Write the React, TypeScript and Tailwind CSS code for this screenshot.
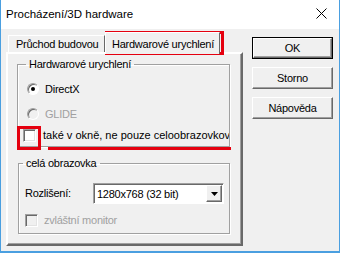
const font = { fontFamily: '"Liberation Sans", Arial, sans-serif' };

function Radio({ checked, disabled }: { checked?: boolean; disabled?: boolean }) {
  return (
    <span
      className={`flex h-[12px] w-[12px] items-center justify-center rounded-full border border-t-[#a0a0a0] border-l-[#a0a0a0] border-r-white border-b-white shadow-[inset_1px_1px_0_#696969] ${
        disabled ? "bg-[#f0f0f0]" : "bg-white"
      }`}
    >
      {checked && <span className="h-[4px] w-[4px] rounded-full bg-black" />}
    </span>
  );
}

function Check({ disabled }: { disabled?: boolean }) {
  return (
    <span
      className={`block h-[13px] w-[13px] shrink-0 border border-t-[#a0a0a0] border-l-[#a0a0a0] border-r-white border-b-white shadow-[inset_1px_1px_0_#696969,inset_-1px_-1px_0_#e3e3e3] ${
        disabled ? "bg-[#f0f0f0]" : "bg-white"
      }`}
    />
  );
}

function Button({ label, def }: { label: string; def?: boolean }) {
  return (
    <div
      className={`flex h-[22px] w-[81px] items-center justify-center ${
        def ? "border border-black" : ""
      }`}
    >
      <div className="flex h-full w-full items-center justify-center border border-t-white border-l-white border-r-[#696969] border-b-[#696969] shadow-[inset_-1px_-1px_0_#a0a0a0] text-black">
        {label}
      </div>
    </div>
  );
}

export default function App() {
  return (
    <div
      className="relative h-[253px] w-[340px] overflow-hidden border-x border-b-2 border-[#4a9fe0] bg-[#f0f0f0] text-[11px] tracking-[-0.25px] text-black"
      style={font}
    >
      {/* title bar */}
      <div className="flex h-[29px] items-center justify-between bg-white pl-[5px] pr-[12px]">
        <span className="text-[11.5px] tracking-normal">Procházení/3D hardware</span>
        <svg width="11" height="11" viewBox="0 0 11 11" className="mb-[2px]">
          <path d="M0.5 0.5 L10.5 10.5 M10.5 0.5 L0.5 10.5" stroke="#000" strokeWidth="1" />
        </svg>
      </div>

      <div className="flex gap-[9px] pl-[5px] pt-[3px]">
        {/* tab control */}
        <div className="w-[237px]">
          <div className="flex h-[20px] items-end pl-[2px]">
            <div className="flex h-[17px] w-[97px] items-center border-t border-l border-r border-t-white border-l-white border-r-[#696969] pl-[7px]">
              Průchod budovou
            </div>
            <div className="relative z-10 -mb-[2px] flex h-[22px] w-[115px] items-start border-t border-l border-r border-t-white border-l-white border-r-[#696969] bg-[#f0f0f0] pl-[6px] pt-[3px]">
              Hardwarové urychlení
            </div>
          </div>
          <div className="h-[194px] border-2 border-t-white border-l-white border-r-[#696969] border-b-[#696969] pl-[9px] pt-[4px] shadow-[inset_-1px_-1px_0_#a0a0a0]">
            <fieldset className="h-[89px] w-[213px] border border-[#a0a0a0] shadow-[1px_1px_0_white,inset_1px_1px_0_white]">
              <legend className="ml-[8px] px-[3px] leading-[13px]">Hardwarové urychlení</legend>
              <div className="flex flex-col pl-[9px] pt-[11px]">
                <div className="flex h-[14px] items-center gap-[6px]">
                  <Radio checked />
                  <span>DirectX</span>
                </div>
                <div className="mt-[11px] flex h-[14px] items-center gap-[6px] text-[#a0a0a0]">
                  <Radio disabled />
                  <span>GLIDE</span>
                </div>
                <div className="-ml-[4px] mt-[7px] flex h-[14px] w-[206px] items-center gap-[7px] overflow-hidden whitespace-nowrap tracking-normal">
                  <Check />
                  <span>také v okně, ne pouze celoobrazovkově</span>
                </div>
              </div>
            </fieldset>

            <fieldset className="mt-[10px] ml-[1px] h-[77px] w-[212px] border border-[#a0a0a0] shadow-[1px_1px_0_white,inset_1px_1px_0_white]">
              <legend className="ml-[4px] px-[3px] leading-[13px]">celá obrazovka</legend>
              <div className="flex items-center pl-[6px] pt-[13px]">
                <span className="w-[68px]">Rozlišení:</span>
                <div className="flex h-[21px] w-[131px] items-center justify-between border border-t-[#a0a0a0] border-l-[#a0a0a0] border-r-white border-b-white bg-white pl-[3px] pr-[1px] shadow-[inset_1px_1px_0_#696969]">
                  <span className="pt-[1px]">1280x768 (32 bit)</span>
                  <div className="flex h-[17px] w-[16px] items-center justify-center border border-t-white border-l-white border-r-[#696969] border-b-[#696969] bg-[#f0f0f0] shadow-[inset_-1px_-1px_0_#a0a0a0]">
                    <svg width="7" height="4" viewBox="0 0 7 4">
                      <path d="M0 0 H7 L3.5 4 Z" fill="#000" />
                    </svg>
                  </div>
                </div>
              </div>
              <div className="mt-[8px] flex items-center gap-[6px] pl-[6px] text-[#a0a0a0]">
                <Check disabled />
                <span>zvláštní monitor</span>
              </div>
            </fieldset>
          </div>
        </div>

        {/* buttons */}
        <div className="flex flex-col gap-[8px] pt-[5px]">
          <Button label="OK" def />
          <Button label="Storno" />
          <Button label="Nápověda" />
        </div>
      </div>

      {/* red annotations */}
      <div className="pointer-events-none absolute left-[104px] top-[31px] h-[24px] w-[119px] border-[3px] border-[#e5000f]" />
      <div className="pointer-events-none absolute left-[16px] top-[126px] h-[24px] w-[24px] border-[3px] border-[#e5000f]" />
      <div className="pointer-events-none absolute left-[47px] top-[147px] h-[3px] w-[183px] bg-[#e5000f]" />
    </div>
  );
}
